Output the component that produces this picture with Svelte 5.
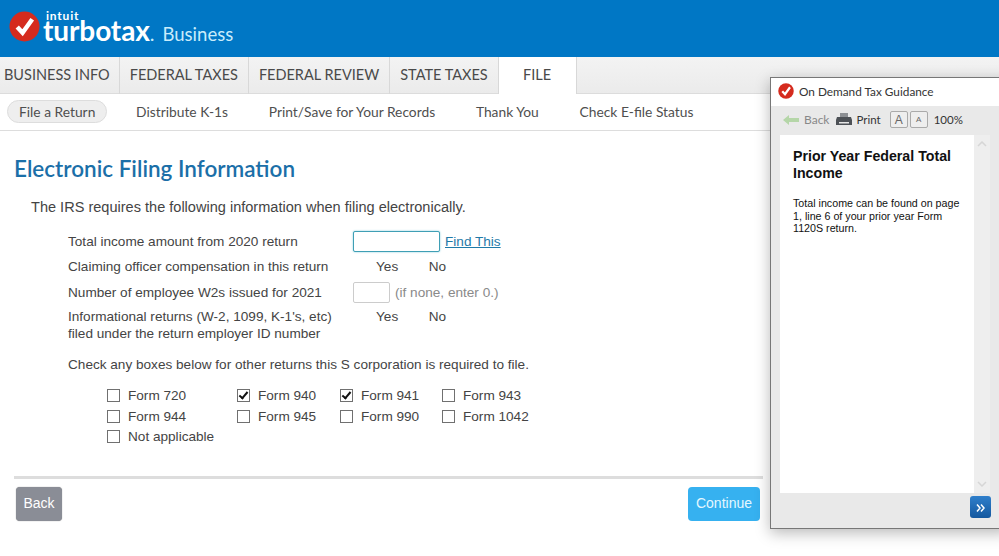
<script>
	const tabs = ['BUSINESS INFO', 'FEDERAL TAXES', 'FEDERAL REVIEW', 'STATE TAXES', 'FILE'];
	const subTabs = ['File a Return', 'Distribute K-1s', 'Print/Save for Your Records', 'Thank You', 'Check E-file Status'];

	let activeTab = 'FILE';
	let activeSub = 'File a Return';

	let forms = [
		{ name: 'Form 720', checked: false },
		{ name: 'Form 940', checked: true },
		{ name: 'Form 941', checked: true },
		{ name: 'Form 943', checked: false },
		{ name: 'Form 944', checked: false },
		{ name: 'Form 945', checked: false },
		{ name: 'Form 990', checked: false },
		{ name: 'Form 1042', checked: false },
		{ name: 'Not applicable', checked: false }
	];
</script>

<div class="page">
	<header>
		<svg class="logo-mark" viewBox="0 0 32 32" width="31" height="31">
			<circle cx="16" cy="16" r="15.5" fill="#d52b1e" />
			<path d="M8.5 16.5l5.5 6L24 8.5" fill="none" stroke="#fff" stroke-width="4.6" />
		</svg>
		<div class="logo-text">
			<span class="intuit">intuit</span>
			<div class="logo-line">
				<span class="turbotax">turbotax</span><span class="dot">.</span>
				<span class="business">Business</span>
			</div>
		</div>
	</header>

	<nav class="tabs">
		{#each tabs as tab}
			<button class="tab" class:active={activeTab === tab} onclick={() => activeTab = tab}>{tab}</button>
		{/each}
	</nav>

	<nav class="subnav">
		{#each subTabs as sub}
			<button class="sub" class:active={activeSub === sub} onclick={() => activeSub = sub}>{sub}</button>
		{/each}
	</nav>

	<main>
		<h1>Electronic Filing Information</h1>
		<p class="intro">The IRS requires the following information when filing electronically.</p>

		<div class="fields">
			<div class="field first">
				<span class="label">Total income amount from 2020 return</span>
				<input class="income" type="text" />
				<a href="#find">Find This</a>
			</div>
			<div class="field">
				<span class="label">Claiming officer compensation in this return</span>
				<span class="yes">Yes</span><span>No</span>
			</div>
			<div class="field">
				<span class="label">Number of employee W2s issued for 2021</span>
				<input class="count" type="text" />
				<span class="hint">(if none, enter 0.)</span>
			</div>
			<div class="field top">
				<span class="label">Informational returns (W-2, 1099, K-1's, etc)<br />filed under the return employer ID number</span>
				<span class="yes">Yes</span><span>No</span>
			</div>
		</div>

		<p class="check-intro">Check any boxes below for other returns this S corporation is required to file.</p>

		<div class="forms">
			{#each forms as form}
				<label class="form-item">
					<input type="checkbox" bind:checked={form.checked} />
					<span>{form.name}</span>
				</label>
			{/each}
		</div>

		<div class="actions">
			<button class="back">Back</button>
			<button class="continue">Continue</button>
		</div>
	</main>

	<aside class="guidance">
		<div class="guidance-title">
			<svg viewBox="0 0 32 32" width="16" height="16">
				<circle cx="16" cy="16" r="15.5" fill="#d52b1e" />
				<path d="M8.5 16.5l5.5 6L24 8.5" fill="none" stroke="#fff" stroke-width="4.4" />
			</svg>
			<span>On Demand Tax Guidance</span>
		</div>
		<div class="toolbar">
			<svg viewBox="0 0 16 10" width="16" height="10">
				<path d="M0 5l6-5v3h10v4H6v3z" fill="#b5d6a8" />
			</svg>
			<span class="tool-back">Back</span>
			<svg class="printer" viewBox="0 0 16 13" width="16" height="13">
				<path d="M4 0h8v4H4z" fill="#8d9094" />
				<path d="M1 4h14l1 3v5H0V7z" fill="#4d5156" />
				<path d="M3 9h10v1.500H3z" fill="#e6e6e6" />
			</svg>
			<span class="tool-print">Print</span>
			<span class="font-btn big">A</span>
			<span class="font-btn small">A</span>
			<span class="zoom-level">100%</span>
		</div>
		<div class="guidance-body">
			<div class="article">
				<h2>Prior Year Federal Total Income</h2>
				<p>Total income can be found on page 1, line 6 of your prior year Form 1120S return.</p>
			</div>
			<div class="scrollbar">
				<svg viewBox="0 0 10 6" width="10" height="6"><path d="M1 5l4-4 4 4" fill="none" stroke="#d6d6d6" stroke-width="1.500" /></svg>
				<svg viewBox="0 0 10 6" width="10" height="6"><path d="M1 1l4 4 4-4" fill="none" stroke="#d6d6d6" stroke-width="1.500" /></svg>
			</div>
		</div>
		<div class="guidance-foot">
			<button class="expand" aria-label="Expand">
				<svg viewBox="0 0 10 8" width="10" height="8">
					<path d="M1 .5L4 4 1 7.500M5 .5L8 4 5 7.500" fill="none" stroke="#fff" stroke-width="1.500" />
				</svg>
			</button>
		</div>
	</aside>
</div>

<style>
	:global(body) {
		margin: 0;
		background: #fff;
	}

	.page {
		position: relative;
		width: 999px;
		height: 556px;
		overflow: hidden;
		font-family: "Liberation Sans", Arial, sans-serif;
		color: #444;
	}

	header {
		height: 57px;
		box-sizing: border-box;
		background: #0077c5;
		display: flex;
		align-items: flex-start;
		padding: 11px 0 0 9px;
		gap: 3px;
		color: #fff;
	}

	.logo-text {
		display: flex;
		flex-direction: column;
		font-family: Lato, sans-serif;
		line-height: 1;
	}

	.intuit {
		font-size: 12px;
		font-weight: 700;
		letter-spacing: 0.8px;
		margin: -1px 0 0 3px;
		height: 9px;
	}

	.logo-line {
		display: flex;
		align-items: baseline;
		white-space: pre;
		line-height: 20px;
		margin-top: 1px;
	}

	.turbotax {
		font-size: 28px;
		font-weight: 700;
		letter-spacing: -0.1px;
	}

	.dot {
		font-size: 20px;
		color: #c9ecfb;
	}

	.business {
		font-size: 18.500px;
		color: #c9ecfb;
		margin-left: 8px;
	}

	.tabs {
		height: 37px;
		box-sizing: border-box;
		display: flex;
		background: linear-gradient(#f3f3f3, #ebebeb);
		border-bottom: 1px solid #dcdcdc;
	}

	.tab {
		height: 37px;
		padding: 0 10px 2px;
		border: 0;
		border-right: 1px solid #d8d8d8;
		background: transparent;
		font-family: Lato, sans-serif;
		font-size: 14.500px;
		color: #4a4a4a;
	}

	.tab:first-child {
		padding: 0 9px 2px 4px;
	}

	.tab.active {
		width: 78px;
		background: #fff;
		border-right: 1px solid #d8d8d8;
	}

	.subnav {
		height: 37px;
		box-sizing: border-box;
		display: flex;
		align-items: center;
		gap: 16.750px;
		padding: 0 0 1px 7px;
		border-bottom: 1px solid #ddd;
	}

	.sub {
		height: 23px;
		padding: 0 11px;
		border: 1px solid transparent;
		border-radius: 12px;
		background: transparent;
		font-family: Lato, sans-serif;
		font-size: 13.800px;
		color: #4f4f4f;
	}

	.sub.active {
		background: #eee;
		border-color: #ddd;
	}

	main {
		padding: 0 236px 0 14px;
	}

	h1 {
		margin: 24px 0 0;
		font-family: Lato, sans-serif;
		font-size: 22.500px;
		line-height: 28px;
		font-weight: 600;
		color: #1b6fa8;
	}

	.intro {
		margin: 14px 0 0 17px;
		font-size: 14.550px;
		line-height: 20px;
	}

	.fields {
		margin: 12px 0 0 54px;
		font-size: 13.600px;
		line-height: 17px;
	}

	.field {
		display: flex;
		align-items: center;
		height: 25.300px;
	}

	.field.top {
		align-items: flex-start;
		height: auto;
		margin-top: 3px;
	}

	.label {
		width: 285px;
		flex: none;
	}

	.yes {
		margin: 0 30.500px 0 23px;
	}

	.field input {
		box-sizing: border-box;
		height: 21px;
		padding: 0;
		background: #fff;
		border-radius: 2px;
	}

	.income {
		width: 87px;
		border: 1px solid #3f9fb5;
		box-shadow: 0 0 2px #7cc7d8;
	}

	.count {
		width: 37px;
		border: 1px solid #ccc;
	}

	.field a {
		margin-left: 5px;
		color: #1f7aa8;
	}

	.hint {
		margin-left: 5px;
		color: #8a8a8a;
	}

	.check-intro {
		margin: 13px 0 0 54px;
		font-size: 13.600px;
		line-height: 20px;
	}

	.forms {
		display: grid;
		grid-template-columns: 130px 103px 102px auto;
		grid-auto-rows: 20.500px;
		margin: 10.400px 0 0 93px;
		font-size: 13.600px;
	}

	.form-item {
		display: flex;
		align-items: center;
		gap: 8px;
	}

	.form-item input {
		appearance: none;
		position: relative;
		box-sizing: border-box;
		width: 13px;
		height: 13px;
		margin: 0;
		border: 1px solid #707070;
		background: #fff;
	}

	.form-item input:checked::after {
		content: '';
		position: absolute;
		left: 3px;
		top: 0;
		width: 3px;
		height: 7px;
		border: solid #111;
		border-width: 0 2px 2px 0;
		transform: rotate(40deg);
	}

	.actions {
		display: flex;
		justify-content: space-between;
		align-items: center;
		margin-top: 29.600px;
		padding: 8px 3px 0 2px;
		border-top: 3px solid #ddd;
	}

	.actions button {
		border: 0;
		border-radius: 4px;
		height: 34px;
		font-family: "Liberation Sans", Arial, sans-serif;
		font-size: 14px;
		color: #fff;
	}

	.actions .back {
		width: 46px;
		padding: 0 0 2px;
		background: #8a8d96;
		box-shadow: 0 0 1px #777;
	}

	.actions .continue {
		width: 72px;
		padding: 0 0 2px;
		background: #36b1f0;
		color: #e4f7ff;
	}

	.guidance {
		position: absolute;
		left: 770px;
		top: 77px;
		width: 240px;
		height: 452px;
		box-sizing: border-box;
		display: flex;
		flex-direction: column;
		background: #e9e9e9;
		border: 1px solid #777;
		box-shadow: 0 4px 14px rgba(0, 0, 0, 0.28);
	}

	.guidance-title {
		height: 28px;
		flex: none;
		box-sizing: border-box;
		display: flex;
		align-items: center;
		gap: 5px;
		padding: 0 0 2px 7px;
		background: #fff;
		font-family: Lato, sans-serif;
		font-size: 11.800px;
		color: #333;
	}

	.toolbar {
		height: 27px;
		flex: none;
		display: flex;
		align-items: center;
		padding-left: 12px;
		box-sizing: border-box;
		font-family: Lato, sans-serif;
		font-size: 12px;
		color: #333;
	}

	.tool-back {
		margin-left: 5px;
		color: #888;
	}

	.printer {
		margin-left: 7px;
	}

	.tool-print {
		margin-left: 4px;
		font-size: 11.500px;
	}

	.font-btn {
		box-sizing: border-box;
		display: flex;
		align-items: center;
		justify-content: center;
		width: 18px;
		height: 17px;
		border: 1px solid #aaa;
		border-radius: 2px;
		background: #eee;
		color: #666;
		font-family: "Liberation Sans", Arial, sans-serif;
	}

	.font-btn.big {
		margin-left: 9px;
		font-size: 12px;
	}

	.font-btn.small {
		margin-left: 2px;
		font-size: 8px;
	}

	.zoom-level {
		margin-left: 6px;
		font-size: 11.500px;
	}

	.guidance-body {
		height: 358px;
		flex: none;
		display: flex;
		margin: 2px 0 0 9px;
	}

	.article {
		width: 194px;
		flex: none;
		box-sizing: border-box;
		padding: 13px 13px;
		background: #fff;
		color: #111;
	}

	h2 {
		margin: 0;
		font-size: 14.200px;
		line-height: 16.500px;
		font-weight: 700;
	}

	.article p {
		margin: 16px 0 0;
		font-size: 10.700px;
		line-height: 12.700px;
	}

	.scrollbar {
		width: 16px;
		display: flex;
		flex-direction: column;
		justify-content: space-between;
		align-items: center;
		padding: 6px 0;
		box-sizing: border-box;
		background: #eee;
	}

	.guidance-foot {
		display: flex;
		padding: 3px 0 0 199px;
	}

	.expand {
		width: 21px;
		height: 22px;
		padding: 0;
		border: 0;
		border-radius: 3px;
		background: linear-gradient(#2f7fcb, #14589f);
	}
</style>
